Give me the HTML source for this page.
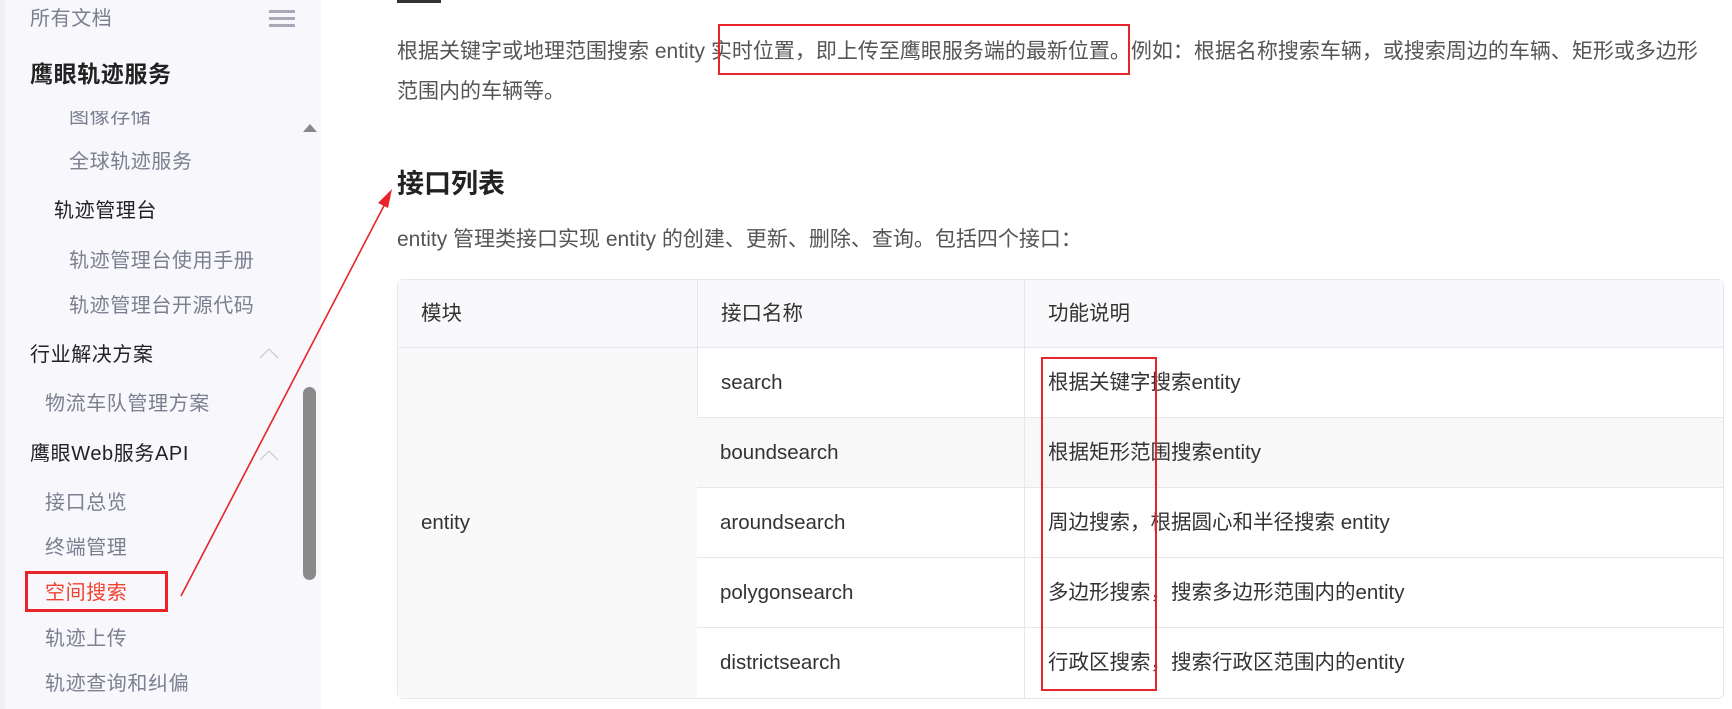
<!DOCTYPE html>
<html><head><meta charset="utf-8"><style>
*{margin:0;padding:0;box-sizing:border-box}
body{width:1732px;height:709px;overflow:hidden;background:#fff;font-family:"Liberation Sans","Noto Sans CJK SC",sans-serif;position:relative}
.sb{position:absolute;left:0;top:0;width:321px;height:709px;background:#f7f7fc;border-left:5px solid #f0f0f4}
.t{position:absolute;white-space:nowrap;font-size:20px;line-height:24px;letter-spacing:0.6px}
.g{color:#7b7f8e}.k{color:#222}
.p{position:absolute;font-size:21px;color:#555;white-space:nowrap}
table{position:absolute;left:397px;top:279px;width:1327px;border-collapse:separate;border-spacing:0;border:1px solid #e6e7ee;border-radius:6px;font-size:20.5px;color:#333}
td,th{border-bottom:1px solid #e6e7ee;border-left:1px solid #e6e7ee;text-align:left;font-weight:normal;padding-left:23px;height:70px;line-height:26px}
th{height:68px;background:#f9f9fc}
td:first-child,th:first-child{border-left:none}
tr:last-child td{border-bottom:none}
.box{position:absolute;border:2px solid #e8232a}
</style></head><body>
<div class="sb">
<div class="t g" style="left:25px;top:7px">所有文档</div>
<div style="position:absolute;left:264px;top:10px;width:26px;height:18px;background:repeating-linear-gradient(#a7a9b8 0 3px,transparent 3px 7px)"></div>
<div class="t k" style="left:25px;top:60px;font-size:23px;font-weight:bold;line-height:28px">鹰眼轨迹服务</div>
<div class="t g" style="left:64px;top:105px;clip-path:inset(6px 0 0 0)">图像存储</div>
<div style="position:absolute;left:298px;top:124px;border:7px solid transparent;border-bottom:8px solid #888;border-top:none"></div>
<div class="t g" style="left:64px;top:150px">全球轨迹服务</div>
<div class="t k" style="left:49px;top:199px">轨迹管理台</div>
<div class="t g" style="left:64px;top:249px">轨迹管理台使用手册</div>
<div class="t g" style="left:64px;top:294px">轨迹管理台开源代码</div>
<div class="t k" style="left:25px;top:343px">行业解决方案</div>
<div class="t g" style="left:40px;top:392px">物流车队管理方案</div>
<div class="t k" style="left:25px;top:442px">鹰眼Web服务API</div>
<div class="t g" style="left:40px;top:491px">接口总览</div>
<div class="t g" style="left:40px;top:536px">终端管理</div>
<div class="t" style="left:40px;top:581px;color:#f0432f">空间搜索</div>
<div class="t g" style="left:40px;top:627px">轨迹上传</div>
<div class="t g" style="left:40px;top:672px">轨迹查询和纠偏</div>
<svg style="position:absolute;left:250px;top:340px" width="30" height="130"><path d="M5 18L14 9L23 18M5 120L14 111L23 120" fill="none" stroke="#ccced8" stroke-width="1.3"/></svg>
<div style="position:absolute;left:298px;top:387px;width:13px;height:193px;background:#8a8a8a;border-radius:7px"></div>
</div>
<div style="position:absolute;left:397px;top:0;width:44px;height:3px;background:#333"></div>
<div class="p" style="left:397px;top:35px">根据关键字或地理范围搜索 entity 实时位置，即上传至鹰眼服务端的最新位置。例如：根据名称搜索车辆，或搜索周边的车辆、矩形或多边形</div>
<div class="p" style="left:397px;top:75px">范围内的车辆等。</div>
<div class="p" style="left:397px;top:162px;font-size:27px;font-weight:bold;color:#222">接口列表</div>
<div class="p" style="left:397px;top:223px">entity 管理类接口实现 entity 的创建、更新、删除、查询。包括四个接口：</div>
<table>
<tr><th style="width:299px">模块</th><th style="width:327px">接口名称</th><th>功能说明</th></tr>
<tr><td rowspan="5" style="background:#f9f9fa;border-bottom:none">entity</td><td>search</td><td>根据关键字搜索entity</td></tr>
<tr style="background:#f8f8f9"><td>boundsearch</td><td>根据矩形范围搜索entity</td></tr>
<tr><td>aroundsearch</td><td>周边搜索，根据圆心和半径搜索 entity</td></tr>
<tr><td>polygonsearch</td><td>多边形搜索，搜索多边形范围内的entity</td></tr>
<tr><td>districtsearch</td><td>行政区搜索，搜索行政区范围内的entity</td></tr>
</table>
<div class="box" style="left:718px;top:24px;width:412px;height:51px"></div>
<div class="box" style="left:25px;top:571px;width:143px;height:41px;border-width:3px"></div>
<div class="box" style="left:1041px;top:357px;width:116px;height:334px"></div>
<svg style="position:absolute;left:0;top:0" width="1732" height="709"><line x1="181" y1="596" x2="388" y2="198" stroke="#e8232a" stroke-width="1.6"/><path d="M392 189L378 203L388 208Z" fill="#e8232a"/></svg>
</body></html>
